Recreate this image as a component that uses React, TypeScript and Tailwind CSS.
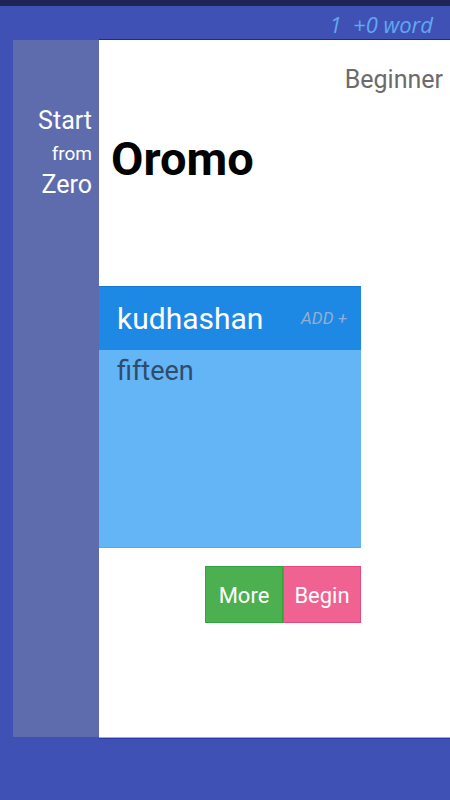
import React from "react";

export default function App() {
  return (
    <div className="w-[450px] h-[800px] bg-[#3f51b5] flex flex-col overflow-hidden" style={{ fontFamily: "Roboto, 'Noto Sans', sans-serif" }}>
      <div className="h-[6px] bg-[#1f2456]" />
      <div className="h-[33px] flex items-center justify-end pr-[17px] pt-[2px]">
        <span className="italic text-[22px] leading-none text-[#5fa8ee]" style={{ fontFamily: "'Open Sans', sans-serif" }}>
          1&nbsp;&nbsp;+0 word
        </span>
      </div>
      <div className="flex h-[699px] pl-[13px]">
        <div className="w-[86px] mt-[1px] h-[697px] bg-[#5e6cae] flex flex-col items-end pr-[7px] pt-[64px] text-white">
          <span className="text-[25px] leading-[34px]">Start</span>
          <span className="text-[19px] leading-[32px]">from</span>
          <span className="text-[25px] leading-[30px]">Zero</span>
        </div>
        <div className="flex-1 bg-white border-t border-[#1a2a9e] border-b border-b-[#a3abdc] h-[699px] flex flex-col">
          <div className="flex justify-end pr-[7px] mt-[26px]">
            <span className="text-[25px] leading-[28px] text-[#6b6b6b]">Beginner</span>
          </div>
          <div className="pl-[12px] mt-[39px]">
            <span className="text-[47px] leading-[52px] font-bold text-black">Oromo</span>
          </div>
          <div className="mt-[101px] w-[262px] flex flex-col">
            <div className="h-[64px] bg-[#1e88e5] border-t border-[#1976d2] flex items-center justify-between pl-[18px] pr-[14px]">
              <span className="text-[30px] leading-none text-white">kudhashan</span>
              <span className="italic text-[17px] leading-none text-[#93aed0]">ADD +</span>
            </div>
            <div className="h-[198px] bg-[#64b5f6] border-b border-[#5aa6e0] pl-[18px] pt-[6px]">
              <span className="text-[27px] leading-[30px] text-[#2e4c6c]">fifteen</span>
            </div>
          </div>
          <div className="w-[262px] flex justify-end mt-[18px]">
            <div className="w-[78px] h-[57px] bg-[#4caf50] border border-[#2fa63f] flex items-center justify-center pt-[2px]">
              <span className="text-[22px] text-white">More</span>
            </div>
            <div className="w-[78px] h-[57px] bg-[#f06292] border border-[#e8477f] flex items-center justify-center pt-[2px]">
              <span className="text-[22px] text-white">Begin</span>
            </div>
          </div>
        </div>
      </div>
      <div className="h-[1px] ml-[99px] bg-[#2a3aa8]" />
      <div className="flex-1" />
    </div>
  );
}
